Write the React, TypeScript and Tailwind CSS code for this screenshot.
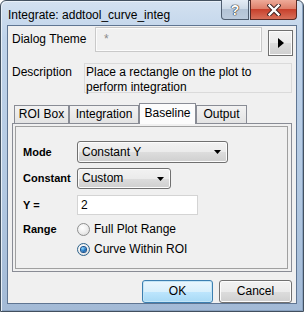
import type { ReactNode } from "react";

const font = "font-['Liberation_Sans',Arial,sans-serif]";

function CaretDown() {
  return (
    <svg width="7" height="4" viewBox="0 0 7 4" className="shrink-0">
      <path d="M0 0h7L3.5 4z" fill="#000" />
    </svg>
  );
}

function Combo({ width, height, label }: { width: string; height: string; label: string }) {
  return (
    <div
      className={`${width} ${height} flex items-center justify-between rounded-[3px] border border-[#707070] bg-[linear-gradient(#f2f2f2_0%,#ebebeb_50%,#dddddd_50%,#cfcfcf_100%)] pl-[4px] pr-[6px] shadow-[inset_0_0_0_1px_#fcfcfc]`}
    >
      <span className="text-[12px] leading-[15px] text-[#000]">{label}</span>
      <CaretDown />
    </div>
  );
}

function Radio({ checked }: { checked?: boolean }) {
  return (
    <div
      className={`flex h-[13px] w-[13px] shrink-0 items-center justify-center rounded-full border ${
        checked ? "border-[#2c628b]" : "border-[#8e8f8f]"
      } bg-[radial-gradient(circle_at_40%_35%,#ffffff_0%,#f0f0f0_45%,#d4d4d4_100%)]`}
    >
      {checked && (
        <div className="h-[5px] w-[5px] rounded-full bg-[radial-gradient(circle_at_35%_30%,#8ad7ff_0%,#1e73c0_55%,#0b3e78_100%)] shadow-[0_0_0_1px_#19508c]" />
      )}
    </div>
  );
}

function Tab({ label, width, active }: { label: string; width: string; active?: boolean }) {
  return (
    <div
      className={`${width} flex items-center justify-center border border-b-0 border-[#898c95] text-[12px] leading-[15px] text-[#000] ${
        active
          ? "relative z-10 -mb-[1px] h-[21px] bg-[#fcfcfc] pb-[2px]"
          : "h-[18px] bg-[linear-gradient(#f2f2f2,#e3e3e3)]"
      }`}
    >
      {label}
    </div>
  );
}

function Row({ label, children, className = "" }: { label: string; children: ReactNode; className?: string }) {
  return (
    <div className={`flex items-center ${className}`}>
      <span className="w-[54px] text-[11px] font-bold leading-[15px] text-[#000]">{label}</span>
      {children}
    </div>
  );
}

function PushButton({ label, width, isDefault }: { label: string; width: string; isDefault?: boolean }) {
  return (
    <div
      className={`${width} flex h-[23px] items-center justify-center rounded-[3px] border text-[12px] leading-[15px] text-[#000] ${
        isDefault
          ? "border-[#3c7fb1] bg-[linear-gradient(#eaf6fd_0%,#d9f0fc_50%,#bee6fd_50%,#a7d9f5_100%)] shadow-[inset_0_0_0_1px_#c4e5f6]"
          : "border-[#707070] bg-[linear-gradient(#f2f2f2_0%,#ebebeb_50%,#dddddd_50%,#cfcfcf_100%)] shadow-[inset_0_0_0_1px_#fcfcfc]"
      }`}
    >
      {label}
    </div>
  );
}

export default function App() {
  return (
    <div className={`${font} h-[312px] w-[304px] overflow-hidden bg-white`}>
      <div className="flex h-[312px] w-[304px] flex-col rounded-t-[6px] border border-[#42505f] bg-[linear-gradient(#d3e1f0_0%,#bfd3ea_12%,#b3c9e2_60%,#a3bad6_100%)] px-[6px] pb-[7px] shadow-[inset_1px_1px_0_#e8f0f8,inset_-1px_-1px_0_#8aa2c0]">
        {/* title bar */}
        <div className="flex h-[28px] items-start justify-between">
          <span className="mt-[7px] pl-[1px] text-[12px] leading-[15px] text-[#000]">
            Integrate: addtool_curve_integ
          </span>
          <div className="-mt-[1px] flex gap-[1px]">
            <div className="flex h-[20px] w-[28px] items-center justify-center rounded-bl-[4px] border border-t-0 border-[#4f5d70] bg-[linear-gradient(#e4ecf5_0%,#cbd8e6_50%,#b3c3d6_50%,#bccbdd_100%)]">
              <span className="text-[14px] font-bold leading-[16px] text-white [text-shadow:0_0_1px_#222,0_0_1px_#222,0_0_1px_#222]">
                ?
              </span>
            </div>
            <div className="flex h-[20px] w-[47px] items-center justify-center rounded-br-[4px] border border-t-0 border-[#5b2a24] bg-[linear-gradient(#eeab99_0%,#de806b_45%,#c8412c_50%,#d8705a_100%)]">
              <svg width="14" height="12" viewBox="0 0 14 12">
                <path d="M2.5 1.5L11.5 10.5M11.5 1.5L2.5 10.5" stroke="#3a2020" strokeWidth="4.2" strokeLinecap="square" />
                <path d="M2.5 1.5L11.5 10.5M11.5 1.5L2.5 10.5" stroke="#ffffff" strokeWidth="2.4" strokeLinecap="square" />
              </svg>
            </div>
          </div>
        </div>

        {/* client area */}
        <div className="flex flex-1 flex-col border border-[#5f7592] bg-[#f0f0f0]">
          <div className="mt-[1px] flex items-start">
            <span className="mt-[5px] w-[87px] pl-[4px] text-[12px] leading-[15px] text-[#000]">Dialog Theme</span>
            <div className="h-[25px] w-[167px] border border-[#c9c9c9] bg-[#f0f0f0] pl-[8px] pt-[4px] text-[12px] leading-[15px] text-[#8a8a8a] shadow-[inset_0_0_0_1px_#fbfbfb]">
              *
            </div>
            <div className="ml-[6px] mt-[3px] flex h-[26px] w-[25px] items-center justify-center border border-[#707070] bg-[linear-gradient(#f2f2f2_0%,#ebebeb_50%,#dddddd_50%,#cfcfcf_100%)] shadow-[inset_0_0_0_1px_#fcfcfc]">
              <svg width="6" height="10" viewBox="0 0 6 10">
                <path d="M0 0L6 5L0 10z" fill="#000" />
              </svg>
            </div>
          </div>

          <div className="mt-[7px] flex items-start">
            <span className="mt-[1px] w-[76px] pl-[4px] text-[12px] leading-[16px] text-[#000]">Description</span>
            <div className="h-[30px] w-[208px] border border-[#dadada] bg-[#f0f0f0] pl-[1px] pt-[1px] text-[12px] leading-[15px] text-[#000]">
              Place a rectangle on the plot to
              <br />
              perform integration
            </div>
          </div>

          {/* tabs */}
          <div className="ml-[4px] mt-[9px] flex h-[21px] items-end pl-[2px]">
            <Tab label="ROI Box" width="w-[55px]" />
            <Tab label="Integration" width="w-[70px]" />
            <Tab label="Baseline" width="w-[57px]" active />
            <Tab label="Output" width="w-[51px]" />
          </div>
          <div className="ml-[4px] h-[149px] w-[280px] border border-[#898c95] bg-[#f0f0f0] pb-[2px] pl-[2px] pr-[3px] pt-[2px]">
            <div className="flex h-full flex-col border border-[#a0a0a0] pl-[7px] pt-[14px]">
              <Row label="Mode">
                <Combo width="w-[151px]" height="h-[22px]" label="Constant Y" />
              </Row>
              <Row label="Constant" className="mt-[5px]">
                <Combo width="w-[94px]" height="h-[21px]" label="Custom" />
              </Row>
              <Row label="Y =" className="mt-[6px]">
                <div className="h-[20px] w-[121px] border border-[#d4d4d4] bg-white pl-[3px] pt-[2px] text-[12px] leading-[15px] text-[#000]">
                  2
                </div>
              </Row>
              <Row label="Range" className="mt-[7px]">
                <div className="flex items-center gap-[4px]">
                  <Radio />
                  <span className="text-[12px] leading-[15px] text-[#000]">Full Plot Range</span>
                </div>
              </Row>
              <div className="mt-[5px] flex items-center gap-[4px] pl-[54px]">
                <Radio checked />
                <span className="text-[12px] leading-[15px] text-[#000]">Curve Within ROI</span>
              </div>
            </div>
          </div>

          <div className="mt-[8px] flex justify-end gap-[6px] pr-[4px]">
            <PushButton label="OK" width="w-[71px]" isDefault />
            <PushButton label="Cancel" width="w-[73px]" />
          </div>
        </div>
      </div>
    </div>
  );
}
